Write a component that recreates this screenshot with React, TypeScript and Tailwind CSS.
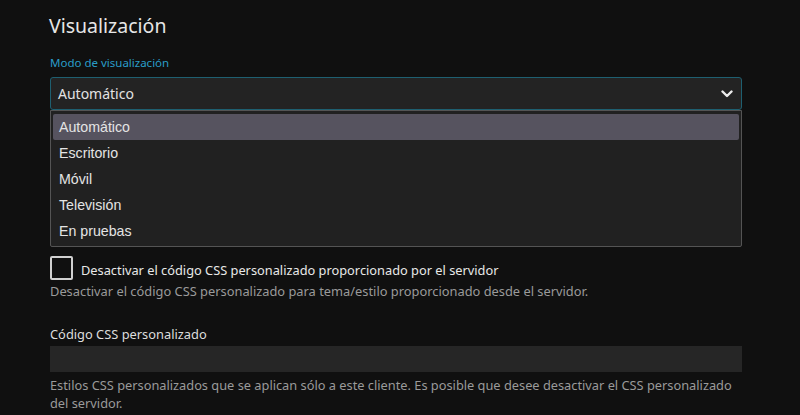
const modes = ["Automático", "Escritorio", "Móvil", "Televisión", "En pruebas"];

function Chevron() {
  return (
    <svg width="12" height="8" viewBox="0 0 12 8" className="text-[#ececec]">
      <path
        d="M1.5 1.5 L6 6 L10.5 1.5"
        fill="none"
        stroke="currentColor"
        strokeWidth="2.4"
        strokeLinecap="round"
        strokeLinejoin="round"
      />
    </svg>
  );
}

function ModeSelect() {
  return (
    <div className="relative mt-[5px]">
      <div className="flex h-[33px] items-center justify-between rounded-[3px] border border-[#1e5f70] bg-[#232323] pl-[7px] pr-[8px] text-[14px] text-[#e2e2e2]">
        <span>Automático</span>
        <Chevron />
      </div>
      {/* open listbox, drawn over the fields below */}
      <div className="absolute left-0 right-0 top-full z-10 rounded-b-[2px] border border-[#545454] bg-[#212121] px-[2px] pb-[2px] pt-[3px] font-['Liberation_Sans',Arial,sans-serif] text-[14.2px] text-[#e4e4e4]">
        {modes.map((m, idx) => (
          <div
            key={`mode${idx}`}
            className={
              idx === 0
                ? "h-[26px] rounded-[2px] bg-[#56535f] pl-[6px] leading-[26px]"
                : "h-[26px] pl-[6px] leading-[26px]"
            }
          >
            {m}
          </div>
        ))}
      </div>
    </div>
  );
}

export default function App() {
  return (
    <div className="min-h-[415px] w-[800px] overflow-hidden bg-[#101010] pl-[50px] pr-[58px] pt-[12px] font-['Noto_Sans',sans-serif]">
      <h2 className="-ml-[1px] h-[28px] text-[19.5px] leading-[28px] text-[#e6e6e6]">Visualización</h2>

      <div className="mt-[14px] text-[11.5px] leading-[18px] text-[#2a9dc8]">Modo de visualización</div>
      <ModeSelect />

      {/* room taken by the open listbox */}
      <div className="h-[146px]" />

      <label className="flex items-start gap-[8px]">
        <span className="h-[24px] w-[23px] shrink-0 rounded-[2px] border-2 border-[#d0d0d0]" />
        <span className="mt-[4px] text-[12.8px] leading-[20px] text-[#e8e8e8]">
          Desactivar el código CSS personalizado proporcionado por el servidor
        </span>
      </label>
      <div className="mt-[2px] text-[12.85px] leading-[18px] text-[#9a9a9a]">
        Desactivar el código CSS personalizado para tema/estilo proporcionado desde el servidor.
      </div>

      <div className="mt-[24px] text-[12.85px] leading-[20px] text-[#dddddd]">Código CSS personalizado</div>
      <div className="mt-[2px] h-[26px] bg-[#262626]" />
      <div className="mt-[4px] text-[12.8px] leading-[18px] text-[#9a9a9a]">
        Estilos CSS personalizados que se aplican sólo a este cliente. Es posible que desee desactivar el CSS
        personalizado del servidor.
      </div>
    </div>
  );
}
